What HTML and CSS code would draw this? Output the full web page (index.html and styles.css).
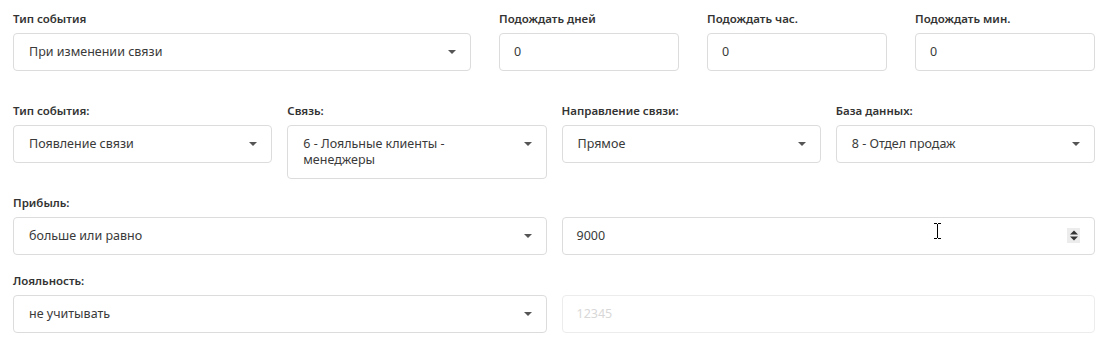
FILE: index.html
```html
<!DOCTYPE html>
<html>

<head>
    <meta charset="utf-8">
    <link rel="stylesheet" href="styles.css">
</head>

<body>
    <div class="container">
        <div class="row row-top">
            <div class="form-group">
                <label>Тип события</label>
                <div class="select"><span>При изменении связи</span><svg class="caret" width="8" height="4" viewBox="0 0 8 4"><path d="M0 0h8L4 4z"/></svg></div>
            </div>
            <div class="form-group">
                <label>Подождать дней</label>
                <div class="input">0</div>
            </div>
            <div class="form-group">
                <label>Подождать час.</label>
                <div class="input">0</div>
            </div>
            <div class="form-group">
                <label>Подождать мин.</label>
                <div class="input">0</div>
            </div>
        </div>

        <div class="row row-four">
            <div class="form-group">
                <label>Тип события:</label>
                <div class="select"><span>Появление связи</span><svg class="caret" width="8" height="4" viewBox="0 0 8 4"><path d="M0 0h8L4 4z"/></svg></div>
            </div>
            <div class="form-group">
                <label>Связь:</label>
                <div class="select"><span>6 - Лояльные клиенты -<br>менеджеры</span><svg class="caret" width="8" height="4" viewBox="0 0 8 4"><path d="M0 0h8L4 4z"/></svg></div>
            </div>
            <div class="form-group">
                <label>Направление связи:</label>
                <div class="select"><span>Прямое</span><svg class="caret" width="8" height="4" viewBox="0 0 8 4"><path d="M0 0h8L4 4z"/></svg></div>
            </div>
            <div class="form-group">
                <label>База данных:</label>
                <div class="select"><span>8 - Отдел продаж</span><svg class="caret" width="8" height="4" viewBox="0 0 8 4"><path d="M0 0h8L4 4z"/></svg></div>
            </div>
        </div>

        <div class="form-group">
            <label>Прибыль:</label>
            <div class="row row-two">
                <div class="select"><span>больше или равно</span><svg class="caret" width="8" height="4" viewBox="0 0 8 4"><path d="M0 0h8L4 4z"/></svg></div>
                <div class="input number">
                    <span>9000</span>
                    <svg class="cursor" width="9" height="16" viewBox="0 0 9 16"><path d="M1 0.5h3M5 0.5h3M4.5 1v14M1 15.5h3M5 15.5h3" stroke="#000" stroke-width="1" fill="none"/></svg>
                    <span class="spin"><svg width="8" height="11" viewBox="0 0 8 11"><path d="M4 0.5L8 4.5H0z M0 6.5h8L4 10.5z" fill="#333"/></svg></span>
                </div>
            </div>
        </div>

        <div class="form-group">
            <label>Лояльность:</label>
            <div class="row row-two">
                <div class="select"><span>не учитывать</span><svg class="caret" width="8" height="4" viewBox="0 0 8 4"><path d="M0 0h8L4 4z"/></svg></div>
                <div class="input disabled">12345</div>
            </div>
        </div>
    </div>
</body>

</html>
```

FILE: styles.css
```css
body {
    margin: 0;
    font-family: "Noto Sans", "Open Sans", sans-serif;
    background-color: #fff;
    color: #333;
}

.container {
    padding: 11px 11px 0 13px;
}

label {
    display: block;
    font-size: 11.5px;
    line-height: 16px;
    font-weight: 600;
    color: #333;
    margin-bottom: 6px;
}

.row {
    display: grid;
    align-items: start;
}

.row-top {
    grid-template-columns: 458px repeat(3, 1fr);
    column-gap: 28px;
    margin-bottom: 32px;
}

.row-top .form-group {
    margin-bottom: 0;
}

.row-four {
    grid-template-columns: repeat(4, 1fr);
    column-gap: 15px;
}

.row-four .form-group {
    margin-bottom: 16px;
}

.row-two {
    grid-template-columns: 1fr 1fr;
    column-gap: 15px;
}

.form-group {
    margin-bottom: 18px;
}

.select,
.input {
    box-sizing: border-box;
    min-height: 38px;
    border: 1px solid #dcdcdc;
    border-radius: 4px;
    padding: 10px 14px 10px 15px;
    font-size: 12.5px;
    line-height: 16px;
    color: #3a3a3a;
    display: flex;
    align-items: flex-start;
    justify-content: space-between;
}

.input {
    padding-left: 14px;
}

.caret {
    fill: #555;
    margin-top: 6px;
    flex-shrink: 0;
}

.number {
    position: relative;
}

.spin {
    width: 13px;
    height: 15px;
    background-color: #ececec;
    display: flex;
    align-items: center;
    justify-content: center;
}

.cursor {
    position: absolute;
    left: 370px;
    top: 5px;
}

.disabled {
    color: #d8d8d8;
    border-color: #ececec;
}
```
